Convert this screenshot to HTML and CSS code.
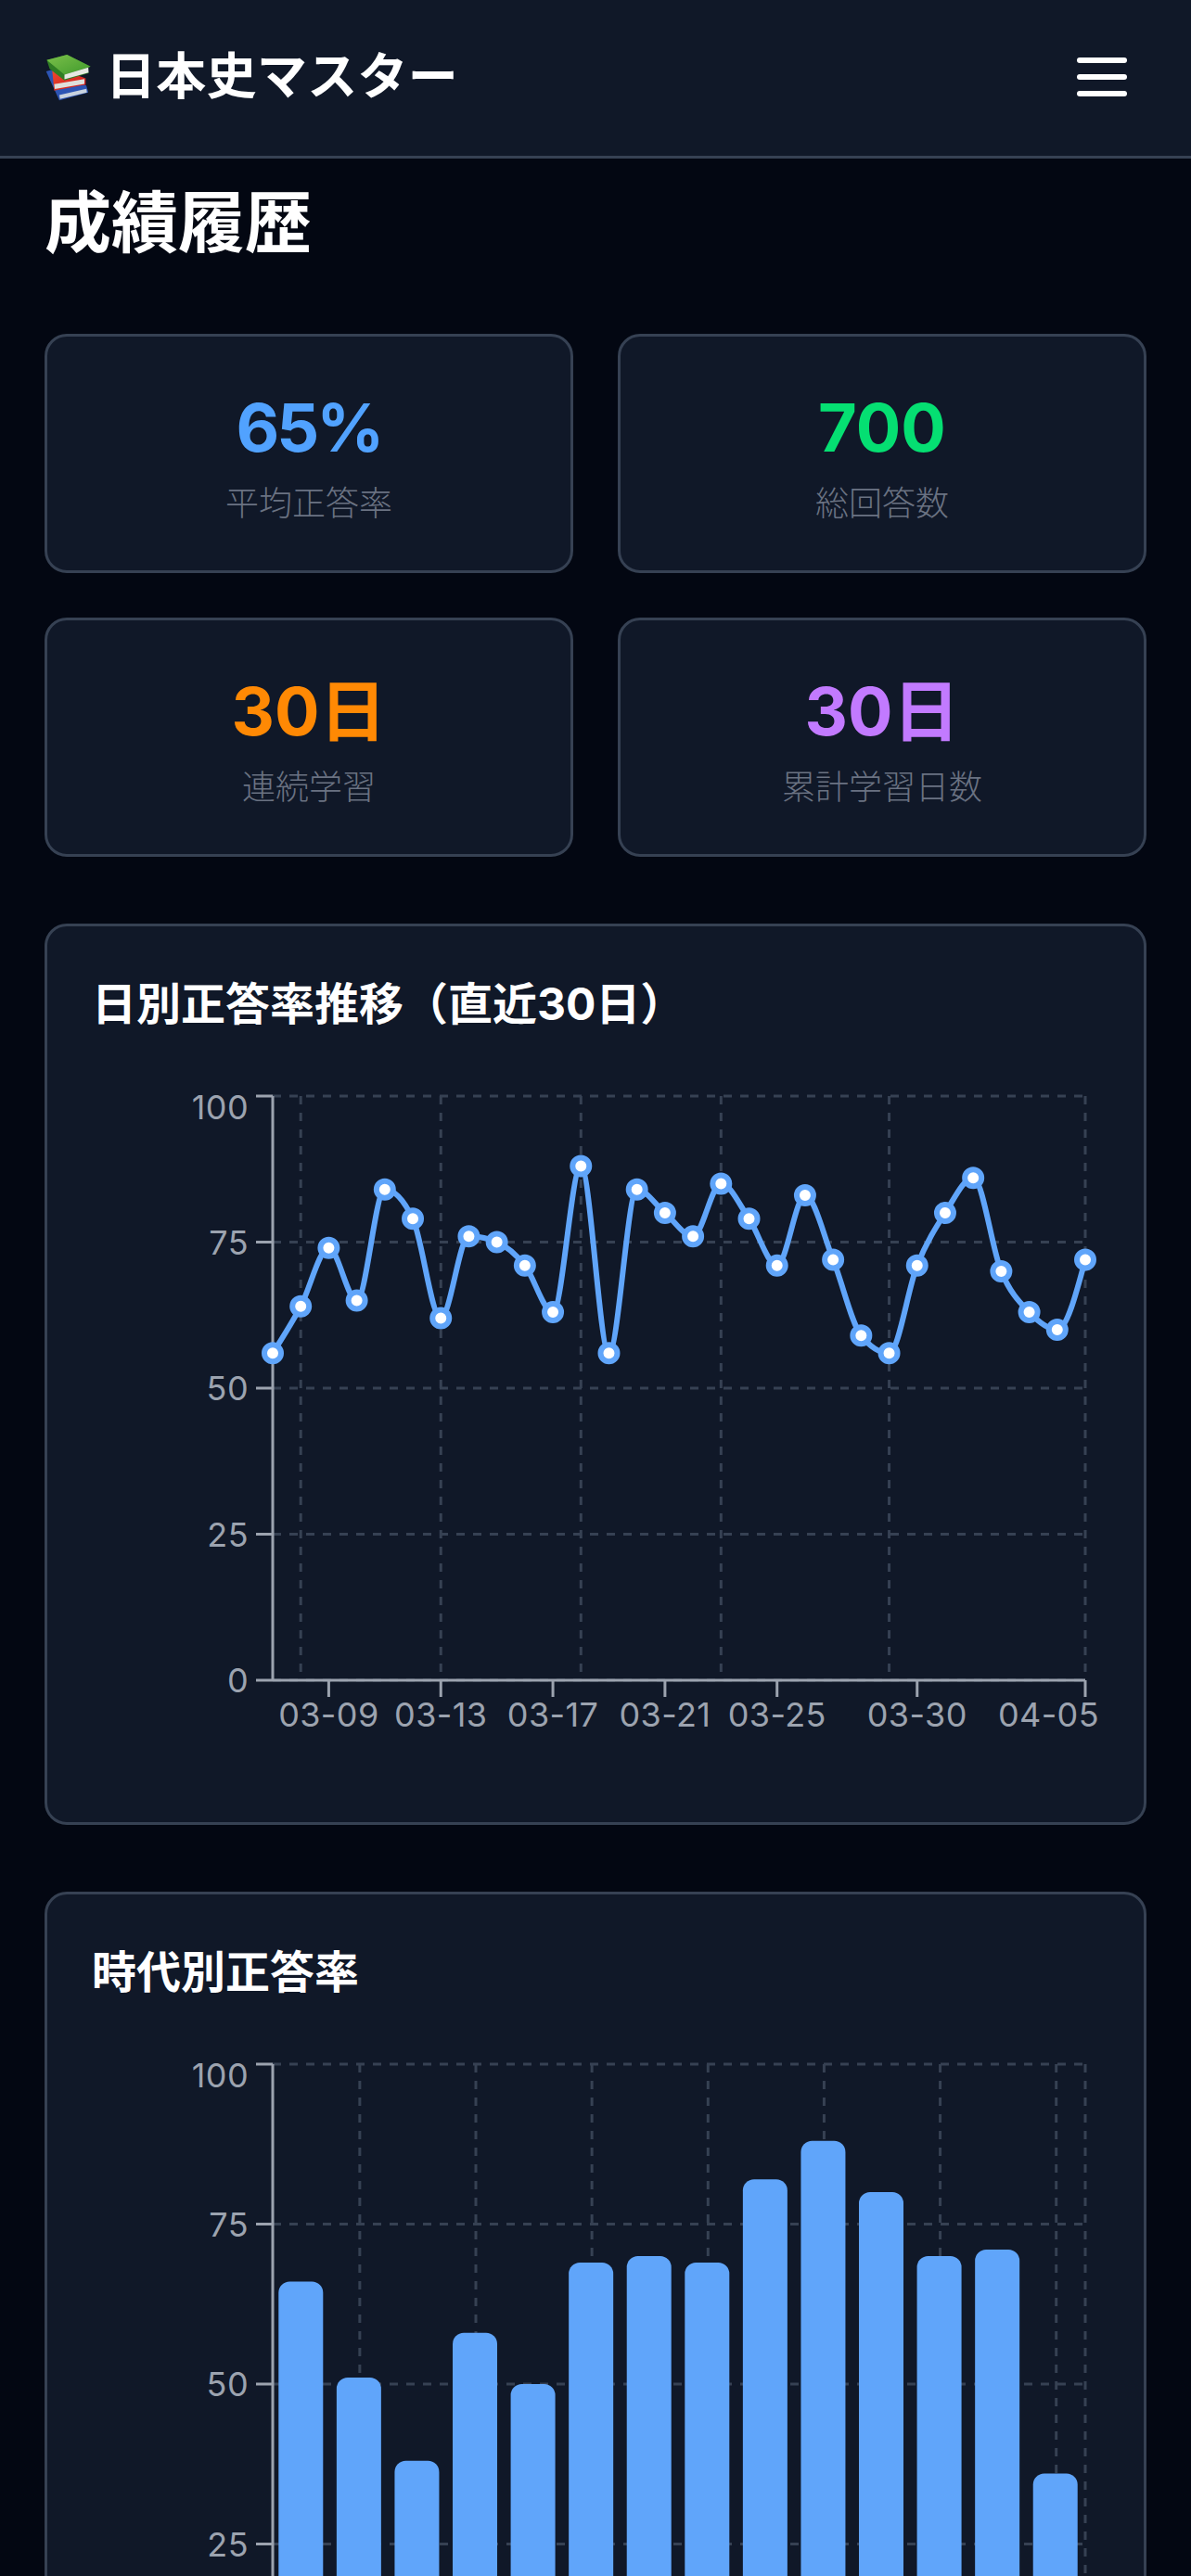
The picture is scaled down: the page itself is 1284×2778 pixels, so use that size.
FILE: index.html
```html
<!DOCTYPE html>
<html lang="ja">
<head>
<meta charset="utf-8">
<title>成績履歴 - 日本史マスター</title>
<link rel="stylesheet" href="styles.css">
</head>
<body>
<header class="topbar">
  <div class="brand">
    <svg class="brand-icon" viewBox="60 80 150 155" aria-hidden="true">
      <defs>
        <linearGradient id="green" x1="0" y1="0" x2="1" y2="1"><stop offset="0" stop-color="#7cc04a"/><stop offset="1" stop-color="#3f9a2c"/></linearGradient>
        <linearGradient id="red" x1="0" y1="0" x2="1" y2="1"><stop offset="0" stop-color="#f04a30"/><stop offset="1" stop-color="#c8181a"/></linearGradient>
      </defs>
      <path d="M65 140 L80 136 L190 184 L196 206 L106 230 Z" fill="#2c54b4"/>
      <path d="M106 214 L190 194 L192 206 L108 226 Z" fill="#c9d2de"/>
      <path d="M84 138 L100 130 L188 162 L188 182 L172 184 L90 200 Z" fill="url(#red)"/>
      <path d="M90 180 L184 164 L184 179 L92 195 Z" fill="#dfe0dc"/>
      <path d="M67 105 L130 88 L203 125 L190 132 L198 145 L122 168 L76 132 Z" fill="#2f7d24"/>
      <path d="M67 105 L130 88 L203 125 L122 150 Z" fill="url(#green)"/>
      <path d="M122 150 L196 128 L197 144 L122 165 Z" fill="#e6e8e2"/>
    </svg>
    <span class="brand-name">日本史マスター</span>
  </div>
  <button class="menu-button" type="button" aria-label="メニュー">
    <span class="menu-bar"></span>
    <span class="menu-bar"></span>
    <span class="menu-bar"></span>
  </button>
</header>
<main class="content">
  <h1 class="page-title">成績履歴</h1>
  <section class="stats">
    <div class="card stat">
      <div class="stat-value blue tight">65%</div>
      <div class="stat-label">平均正答率</div>
    </div>
    <div class="card stat">
      <div class="stat-value green">700</div>
      <div class="stat-label">総回答数</div>
    </div>
    <div class="card stat">
      <div class="stat-value orange">30日</div>
      <div class="stat-label">連続学習</div>
    </div>
    <div class="card stat">
      <div class="stat-value purple">30日</div>
      <div class="stat-label">累計学習日数</div>
    </div>
  </section>
  <section class="card chart-card">
    <h2 class="chart-title">日別正答率推移（直近30日）</h2>
    <svg class="chart" id="daily-chart" width="1086" height="750" viewBox="0 0 1086 750"></svg>
  </section>
  <section class="card chart-card">
    <h2 class="chart-title">時代別正答率</h2>
    <svg class="chart" id="era-chart" width="1086" height="810" viewBox="0 0 1086 810"></svg>
  </section>
</main>
<script src="script.js"></script>
</body>
</html>
```
FILE: styles.css
```css
* {
  box-sizing: border-box;
}

html,
body {
  margin: 0;
  padding: 0;
  height: 2778px;
  overflow: hidden;
}

body {
  background: #030712;
  color: #fff;
  font-family: Inter, "Noto Sans CJK JP", sans-serif;
}

.topbar {
  display: flex;
  align-items: center;
  justify-content: space-between;
  height: 171px;
  padding: 0 69px 3px 48px;
  background: #101828;
  border-bottom: 3px solid #364153;
}

.brand {
  display: flex;
  align-items: center;
  gap: 14px;
}

.brand-icon {
  width: 52px;
  height: 54px;
  flex: none;
}

.brand-name {
  font-size: 54px;
  line-height: 72px;
  font-weight: 700;
  letter-spacing: 0.3px;
}

.menu-button {
  display: flex;
  flex-direction: column;
  gap: 12px;
  padding: 0;
  border: 0;
  background: none;
}

.menu-bar {
  display: block;
  width: 54px;
  height: 6px;
  border-radius: 3px;
  background: #fff;
}

.content {
  padding: 21px 48px 0;
}

.page-title {
  margin: 0 0 72px;
  font-size: 72px;
  line-height: 96px;
  font-weight: 700;
}

.card {
  background: #101828;
  border: 3px solid #364153;
  border-radius: 24px;
}

.stats {
  display: grid;
  grid-template-columns: 1fr 1fr;
  gap: 48px;
  margin-bottom: 72px;
}

.stat {
  padding: 48px;
  text-align: center;
}

.stat-value {
  padding-top: 2px;
  font-size: 72px;
  line-height: 96px;
  font-weight: 700;
}

.tight {
  letter-spacing: -3px;
}

.stat-label {
  margin-top: 10px;
  font-size: 36px;
  line-height: 48px;
  font-weight: 300;
  color: #6a7282;
}

.blue { color: #51a2ff; }
.green { color: #05df72; }
.orange { color: #ff8904; }
.purple { color: #c27aff; }

.chart-card {
  padding: 48px;
  margin-bottom: 72px;
}

.chart-title {
  margin: 0 0 48px;
  font-size: 48px;
  line-height: 72px;
  font-weight: 700;
}

.chart {
  display: block;
}

.grid-line {
  stroke: #364153;
  stroke-width: 3;
  stroke-dasharray: 9 9;
  fill: none;
}

.axis-line {
  stroke: #9ca3af;
  stroke-width: 3;
  fill: none;
}

.axis-text {
  fill: #9ca3af;
  font-family: Inter, sans-serif;
  font-size: 36px;
  letter-spacing: 0.4px;
}

.trend-line {
  stroke: #60a5fa;
  stroke-width: 6;
  fill: none;
}

.trend-dot {
  stroke: #60a5fa;
  stroke-width: 6;
  fill: #fff;
}

.bar {
  fill: #60a5fa;
}
```
FILE: script.js
```javascript
var NS = 'http://www.w3.org/2000/svg';
var LEFT = 195, RIGHT = 1071, TOP = 15;

function add(svg, tag, attrs, text) {
  var el = document.createElementNS(NS, tag);
  for (var k in attrs) el.setAttribute(k, attrs[k]);
  if (text !== undefined) el.textContent = text;
  svg.appendChild(el);
  return el;
}

function sign(v) { return v < 0 ? -1 : 1; }

// Monotone-X interpolation
function monotonePath(pts) {
  var n = pts.length, t = [], i;
  var h = pts[1][0] - pts[0][0];
  for (i = 1; i < n - 1; i++) {
    var s0 = (pts[i][1] - pts[i - 1][1]) / h;
    var s1 = (pts[i + 1][1] - pts[i][1]) / h;
    var p = (s0 + s1) / 2;
    t[i] = (sign(s0) + sign(s1)) * Math.min(Math.abs(s0), Math.abs(s1), 0.5 * Math.abs(p)) || 0;
  }
  var firstSlope = (pts[1][1] - pts[0][1]) / h;
  var lastSlope = (pts[n - 1][1] - pts[n - 2][1]) / h;
  t[0] = (3 * firstSlope - t[1]) / 2;
  t[n - 1] = (3 * lastSlope - t[n - 2]) / 2;
  var d = 'M' + pts[0][0] + ',' + pts[0][1];
  for (i = 0; i < n - 1; i++) {
    var dx = h / 3;
    d += 'C' + (pts[i][0] + dx) + ',' + (pts[i][1] + dx * t[i]) + ' ' +
      (pts[i + 1][0] - dx) + ',' + (pts[i + 1][1] - dx * t[i + 1]) + ' ' +
      pts[i + 1][0] + ',' + pts[i + 1][1];
  }
  return d;
}

function frame(svg, bottom, gridX, labels) {
  var unit = (bottom - TOP) / 100;
  [100, 75, 50, 25, 0].forEach(function (v) {
    var y = bottom - v * unit;
    add(svg, 'line', { x1: LEFT, x2: RIGHT, y1: y, y2: y, 'class': 'grid-line' });
  });
  gridX.forEach(function (x) {
    add(svg, 'line', { x1: x, x2: x, y1: TOP, y2: bottom, 'class': 'grid-line' });
  });
  labels.forEach(function (v) {
    var y = bottom - v * unit;
    add(svg, 'line', { x1: LEFT - 18, x2: LEFT, y1: y, y2: y, 'class': 'axis-line' });
    var baseline = y + 13 + (v === 100 ? 12 : 0);
    add(svg, 'text', { x: LEFT - 26, y: baseline, 'text-anchor': 'end', 'class': 'axis-text' }, String(v));
  });
  add(svg, 'line', { x1: LEFT, x2: LEFT, y1: TOP, y2: bottom, 'class': 'axis-line' });
  add(svg, 'line', { x1: LEFT, x2: RIGHT, y1: bottom, y2: bottom, 'class': 'axis-line' });
}

function dailyChart() {
  var svg = document.getElementById('daily-chart');
  var bottom = 645;
  var values = [56, 64, 74, 65, 84, 79, 62, 76, 75, 71, 63, 88, 56, 84, 80, 76, 85, 79, 71, 83, 72, 59, 56, 71, 80, 86, 70, 63, 60, 72];
  var step = (RIGHT - LEFT) / (values.length - 1);
  var unit = (bottom - TOP) / 100;
  function px(i) { return LEFT + i * step; }
  frame(svg, bottom, [1, 6, 11, 16, 22, 29].map(px), [100, 75, 50, 25, 0]);
  var ticks = [[2, '03-09'], [6, '03-13'], [10, '03-17'], [14, '03-21'], [18, '03-25'], [23, '03-30'], [29, '04-05']];
  ticks.forEach(function (tick) {
    var x = px(tick[0]);
    add(svg, 'line', { x1: x, x2: x, y1: bottom, y2: bottom + 18, 'class': 'axis-line' });
    var last = tick[0] === 29;
    add(svg, 'text', { x: last ? x + 15 : x, y: bottom + 50, 'text-anchor': last ? 'end' : 'middle', 'class': 'axis-text' }, tick[1]);
  });
  var pts = values.map(function (v, i) { return [px(i), bottom - v * unit]; });
  add(svg, 'path', { d: monotonePath(pts), 'class': 'trend-line' });
  pts.forEach(function (p) {
    add(svg, 'circle', { cx: p[0], cy: p[1], r: 9, 'class': 'trend-dot' });
  });
}

function eraChart() {
  var svg = document.getElementById('era-chart');
  var bottom = 705;
  var values = [66, 51, 38, 58, 50, 69, 70, 69, 82, 88, 80, 70, 71, 36];
  var step = (RIGHT - LEFT) / values.length;
  var unit = (bottom - TOP) / 100;
  var width = 48;
  function center(i) { return LEFT + (i + 0.5) * step; }
  frame(svg, bottom, [1, 3, 5, 7, 9, 11, 13].map(center).concat([RIGHT]), [100, 75, 50, 25]);
  values.forEach(function (v, i) {
    var x = LEFT + 6.3 + i * step, y = bottom - v * unit, r = 12;
    add(svg, 'path', {
      d: 'M' + x + ',' + bottom + 'V' + (y + r) + 'A' + r + ',' + r + ' 0 0 1 ' + (x + r) + ',' + y +
        'H' + (x + width - r) + 'A' + r + ',' + r + ' 0 0 1 ' + (x + width) + ',' + (y + r) + 'V' + bottom + 'Z',
      'class': 'bar'
    });
  });
}

dailyChart();
eraChart();
```
